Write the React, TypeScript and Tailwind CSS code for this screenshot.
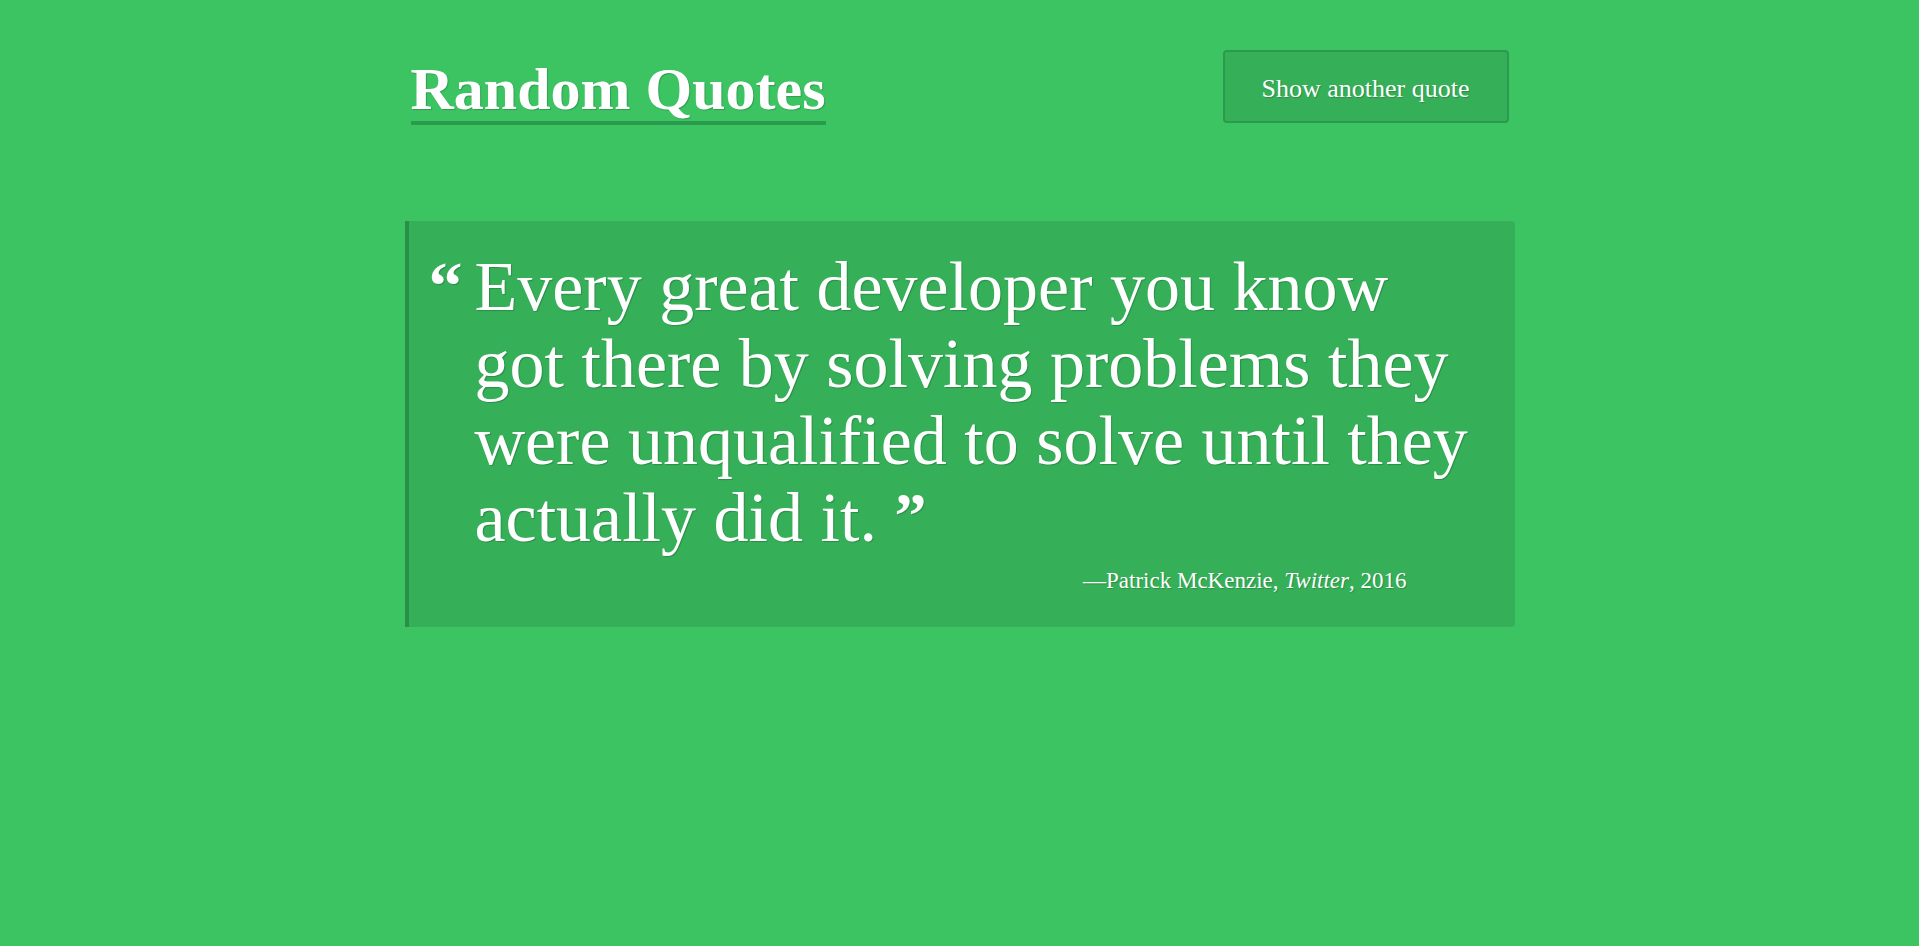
const serif = "font-['Liberation_Serif','DejaVu_Serif',serif]";
const shadow = "[text-shadow:1px_1px_1px_rgba(0,0,0,0.2)]";

export default function App() {
  return (
    <div className={`min-h-screen w-full bg-[#3cc463] text-white ${serif}`}>
      <div className="mx-auto w-[1110px] pt-[50px]">
        <header className="flex items-start justify-between px-[6px]">
          <h1 className={`mt-[16px] border-b-4 border-[#2c9a4c] pb-[9px] text-[60px] font-bold leading-[46px] ${shadow}`}>
            Random Quotes
          </h1>
          <button className={`h-[73px] w-[286px] rounded-[4px] border-2 border-[#2c9a4c] bg-black/10 pt-[4px] text-[26px] ${shadow}`}>
            Show another quote
          </button>
        </header>

        <blockquote className="mt-[96px] h-[406px] rounded-r-[4px] border-l-4 border-[#2a8f47] bg-black/10 pt-[27px] pl-[20px] pr-[20px]">
          <div className="flex">
            <span className={`w-[46px] shrink-0 pt-[18px] text-[68px] font-bold leading-[40px] ${shadow}`}>
              &ldquo;
            </span>
            <p className={`text-[70px] leading-[77px] ${shadow}`}>
              Every great developer you know
              <br />
              got there by solving problems they
              <br />
              were unqualified to solve until they
              <br />
              actually did it.{" "}
              <span className="relative top-[-4px] text-[64px] font-bold">&rdquo;</span>
            </p>
          </div>
          <p className={`mt-[6px] pr-[88px] text-right text-[23px] ${shadow}`}>
            &mdash;Patrick McKenzie, <cite className="italic">Twitter</cite>, 2016
          </p>
        </blockquote>
      </div>
    </div>
  );
}
